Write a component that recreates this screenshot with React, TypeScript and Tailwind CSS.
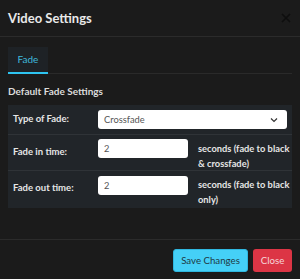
export default function App() {
  return (
    <div
      className="w-[300px] h-[279px] bg-[#1b1b1b] text-[#e4e4e4] flex flex-col overflow-hidden"
      style={{ fontFamily: 'Lato, "Open Sans", sans-serif' }}
    >
      {/* Header */}
      <div className="h-[37px] shrink-0 flex items-center justify-between px-2 border-b border-[#2b2b2b]">
        <h5 className="text-[13px] font-bold leading-none text-[#e9e9e9]">Video Settings</h5>
        <svg className="w-[10px] h-[10px] mr-[1px]" viewBox="0 0 10 10" fill="none" stroke="#0e0e0e" strokeWidth={1.6}>
          <path d="M1 1l8 8M9 1l-8 8" />
        </svg>
      </div>

      {/* Body */}
      <div className="flex-1 px-2 pt-[10px]">
        <div className="flex border-b border-[#2a2a2a]">
          <div className="w-[40px] h-[27px] bg-[#1e2226] flex items-center justify-center text-[10px] text-[#3fb8dc] border-b-2 border-[#2ec4f0] -mb-px">
            Fade
          </div>
        </div>

        <div className="mt-[12px] text-[10px] font-bold text-[#dcdcdc] leading-none">
          Default Fade Settings
        </div>

        <div className="mt-[9px] bg-[#212529] text-[9.5px] font-bold text-[#e6e6e6]">
          <div className="h-[30px] flex items-center pl-[5px] pr-[5px] border-b border-[#2f3337]">
            <div className="w-[85px] shrink-0">Type of Fade:</div>
            <div className="flex-1 h-[19px] bg-white rounded-[3px] flex items-center justify-between pl-[6px] pr-[9px] text-[9.3px] font-normal text-[#555]">
              <span>Crossfade</span>
              <svg className="w-[8px] h-[8px]" viewBox="0 0 8 8" fill="none" stroke="#333" strokeWidth={1.2}>
                <path d="M1 2.5l3 3 3-3" />
              </svg>
            </div>
          </div>
          <div className="h-[36px] flex items-start pl-[5px] pr-[5px] border-b border-[#2f3337]">
            <div className="w-[85px] shrink-0 pt-[10px]">Fade in time:</div>
            <div className="w-[90px] shrink-0 h-[19px] bg-white rounded-[3px] flex items-center pl-[6px] text-[9.3px] font-normal text-[#555] mt-[4px]">
              2
            </div>
            <div className="ml-[10px] leading-[15px] pt-[6px] whitespace-nowrap text-[9.3px]">
              seconds (fade to black
              <br />& crossfade)
            </div>
          </div>
          <div className="h-[37px] flex items-start pl-[5px] pr-[5px]">
            <div className="w-[85px] shrink-0 pt-[10px]">Fade out time:</div>
            <div className="w-[90px] shrink-0 h-[19px] bg-white rounded-[3px] flex items-center pl-[6px] text-[9.3px] font-normal text-[#555] mt-[5px]">
              2
            </div>
            <div className="ml-[10px] leading-[15px] pt-[6px] whitespace-nowrap text-[9.3px]">
              seconds (fade to black
              <br />
              only)
            </div>
          </div>
        </div>
      </div>

      {/* Footer */}
      <div className="h-[40px] shrink-0 border-t border-[#2b2b2b] flex items-start justify-end gap-[5px] px-2 pt-[9px]">
        <button className="h-[23px] w-[75px] rounded-[3px] bg-[#45d0f7] border border-[#2fb7e0] text-[9.7px] text-[#1f3a45]">
          Save Changes
        </button>
        <button className="h-[23px] w-[39px] rounded-[3px] bg-[#dc3545] text-[9.7px] text-[#f5d6d9]">
          Close
        </button>
      </div>
    </div>
  );
}
